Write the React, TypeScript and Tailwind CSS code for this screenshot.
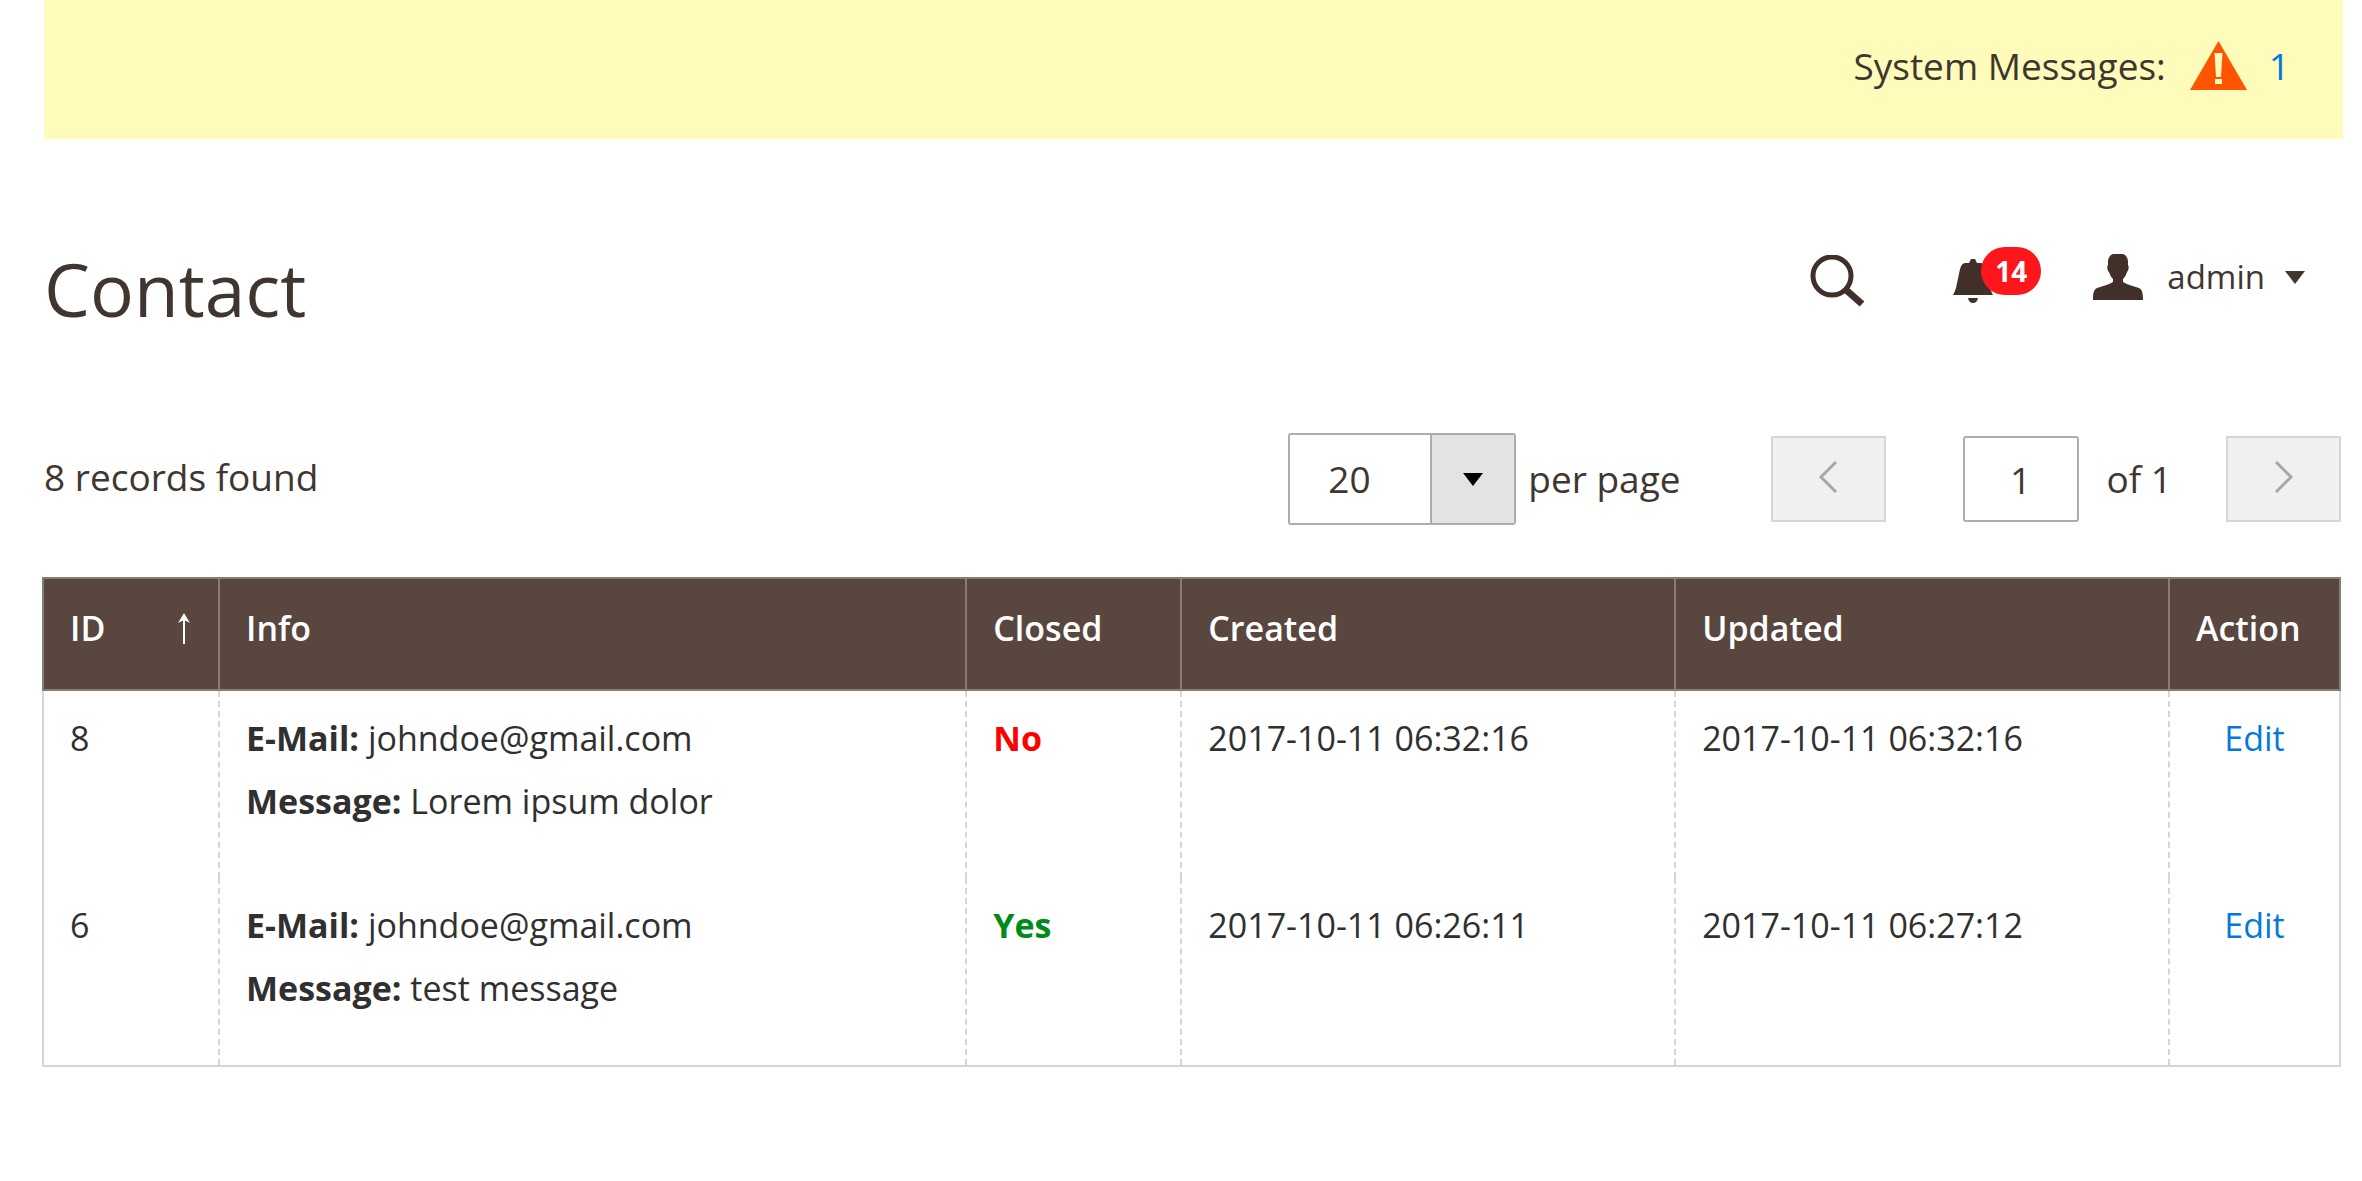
import { useId, useState } from "react";

type Row = {
  id: number;
  email: string;
  message: string;
  closed: boolean;
  created: string;
  updated: string;
};

const rows: Row[] = [
  { id: 8, email: "johndoe@gmail.com", message: "Lorem ipsum dolor", closed: false, created: "2017-10-11 06:32:16", updated: "2017-10-11 06:32:16" },
  { id: 6, email: "johndoe@gmail.com", message: "test message", closed: true, created: "2017-10-11 06:26:11", updated: "2017-10-11 06:27:12" },
];

function WarningIcon() {
  return (
    <svg viewBox="0 0 57 49" className="h-[49px] w-[57px]" aria-hidden="true">
      <path d="M28.500 0 57 49H0Z" fill="#ff5501" />
      <path d="M24.500 12h8l-1.500 24h-5Z" fill="#fffbbb" />
      <rect x="25" y="38" width="7" height="5" fill="#fffbbb" />
    </svg>
  );
}

function SearchIcon() {
  return (
    <svg viewBox="0 0 56 52" className="h-[52px] w-[56px]" fill="none" stroke="#41302a" aria-hidden="true">
      <circle cx="23" cy="21" r="19" strokeWidth="5" />
      <path d="M36 34 53 49" strokeWidth="7" />
    </svg>
  );
}

function BellIcon() {
  return (
    <svg viewBox="0 0 40 44" className="h-[44px] w-[40px]" fill="#41302a" aria-hidden="true">
      <path d="M16 4 18 0h4l2 4h4c2 0 4 2 5 6l4 19c1 3 2 5 3 7H0c1-2 2-4 3-7L7 10c1-4 3-6 5-6Z" />
      <path d="M15 39h10q-1 5-5 5t-5-5Z" />
    </svg>
  );
}

function UserIcon() {
  return (
    <svg viewBox="0 0 50 46" className="h-[46px] w-[50px]" fill="#41302a" aria-hidden="true">
      <path d="M20 0h10c3 1 5 4 5 8v3c1 1 1 5-1 7-1 3-2 5-4 7v3c5 3 11 4 16 6 3 2 4 4 4 12H0c0-8 1-10 4-12 5-2 11-3 16-6v-3c-2-2-3-4-4-7-2-2-2-6-1-7V8c0-4 2-7 5-8Z" />
    </svg>
  );
}

function Caret({ className }: { className: string }) {
  return (
    <svg viewBox="0 0 20 13" className={className} fill="currentColor" aria-hidden="true">
      <path d="M0 0h20L10 13Z" />
    </svg>
  );
}

function Chevron({ next }: { next?: boolean }) {
  return (
    <svg viewBox="0 0 20 34" className="mb-1 h-[34px] w-[20px]" fill="none" stroke="#a9a6a4" strokeWidth="3" aria-hidden="true">
      <path d={next ? "M2 2 17 17 2 32" : "M18 2 3 17 18 32"} />
    </svg>
  );
}

const pageButton = "flex h-[86px] w-[115px] items-center justify-center border-2 border-[#d6d6d6] bg-[#f0f0f0]";
const headCell = "border-x-2 border-[#8a7c76] px-[26px] pb-[38px] pt-[26px] text-left font-semibold leading-[46px]";
const bodyCell = "border-x-2 border-dashed border-[#d6d6d6] px-[26px] pb-[45px] pt-[16px]";

export default function App() {
  const [perPage, setPerPage] = useState("20");
  const [page, setPage] = useState("1");
  const perPageId = useId();
  const pageId = useId();

  return (
    <div className="min-h-screen bg-white pl-[42px] pr-[21px] font-['Open_Sans',sans-serif] text-[37px] leading-[50px] text-[#41362f]">
      <div className="-mr-0.5 ml-0.5 flex h-[139px] items-center justify-end bg-[#fffbbb] pb-2 pr-[53px]">
        <span>System Messages:</span>
        <span className="ml-6">
          <WarningIcon />
        </span>
        <a href="#messages" className="ml-[22px] text-[#007bdb]">1</a>
      </div>

      <header className="flex items-start justify-between pl-0.5 pt-[100px]">
        <h1 className="text-[73px] leading-[100px]">Contact</h1>
        <div className="flex items-center pr-[36px] pt-2">
          <button type="button" aria-label="Search" className="mt-2">
            <SearchIcon />
          </button>
          <button type="button" aria-label="Notifications" className="relative ml-[88px] mt-2 w-[88px]">
            <BellIcon />
            <span className="absolute -top-3 right-0 flex h-12 w-[60px] items-center justify-center rounded-full bg-[#ff161c] text-[28px] font-bold text-white">14</span>
          </button>
          <button type="button" className="ml-[52px] flex items-center text-[33px]">
            <UserIcon />
            <span className="ml-6">admin</span>
            <Caret className="ml-5 h-[13px] w-[20px]" />
          </button>
        </div>
      </header>

      <div className="mt-[94px] flex items-center">
        <p className="grow pb-1 pl-0.5">8 records found</p>
        <div className="flex items-center">
          <div className="relative">
            <select
              id={perPageId}
              value={perPage}
              onChange={(e) => setPerPage(e.target.value)}
              className="h-[92px] w-[228px] appearance-none rounded-[3px] border-2 border-[#adadad] bg-white pl-[38px]"
            >
              <option>20</option>
              <option>30</option>
              <option>50</option>
              <option>100</option>
              <option>200</option>
            </select>
            <span className="pointer-events-none absolute inset-y-0.5 right-0.5 flex w-[84px] items-center justify-center border-l-2 border-[#adadad] bg-[#e3e3e3] text-black">
              <Caret className="h-[13px] w-[20px]" />
            </span>
          </div>
          <label htmlFor={perPageId} className="ml-3">per page</label>
        </div>
        <button type="button" disabled aria-label="Previous page" className={pageButton + " ml-[90px]"}>
          <Chevron />
        </button>
        <input
          id={pageId}
          value={page}
          onChange={(e) => setPage(e.target.value)}
          className="ml-[77px] h-[86px] w-[116px] rounded-[3px] border-2 border-[#adadad] text-center"
        />
        <label htmlFor={pageId} className="ml-[28px]">of 1</label>
        <button type="button" disabled aria-label="Next page" className={pageButton + " ml-[54px]"}>
          <Chevron next />
        </button>
      </div>

      <table className="mt-[52px] w-full table-fixed border-collapse border-2 border-[#d6d6d6] text-[34px] text-[#303030]">
        <colgroup>
          <col className="w-[176px]" />
          <col />
          <col className="w-[215px]" />
          <col className="w-[21.5%]" />
          <col className="w-[21.5%]" />
          <col className="w-[171px]" />
        </colgroup>
        <thead className="border-2 border-[#8a7c76] bg-[#59463f] text-white">
          <tr>
            <th scope="col" aria-sort="ascending" className={headCell}>
              <button type="button" className="flex w-full items-center justify-between font-semibold">
                ID
                <svg viewBox="0 0 16 32" className="h-8 w-4" fill="none" stroke="white" strokeWidth="2" aria-hidden="true">
                  <path d="M8 32V3" />
                  <path d="M8 1 14 11 8 8 2 11Z" fill="white" stroke="none" />
                </svg>
              </button>
            </th>
            <th scope="col" className={headCell}>Info</th>
            <th scope="col" className={headCell}>Closed</th>
            <th scope="col" className={headCell}>Created</th>
            <th scope="col" className={headCell}>Updated</th>
            <th scope="col" className={headCell}>Action</th>
          </tr>
        </thead>
        <tbody>
          {rows.map((r) => (
            <tr key={r.id} className="align-top leading-[63px]">
              <td className={bodyCell}>{r.id}</td>
              <td className={bodyCell}>
                <p><b>E-Mail:</b> {r.email}</p>
                <p><b>Message:</b> {r.message}</p>
              </td>
              <td className={bodyCell}>
                <b className={r.closed ? "text-[#008a17]" : "text-[#ff0000]"}>{r.closed ? "Yes" : "No"}</b>
              </td>
              <td className={bodyCell}>{r.created}</td>
              <td className={bodyCell}>{r.updated}</td>
              <td className={bodyCell + " text-center"}>
                <a href={"#edit-" + r.id} className="text-[#007bdb]">Edit</a>
              </td>
            </tr>
          ))}
        </tbody>
      </table>
    </div>
  );
}
